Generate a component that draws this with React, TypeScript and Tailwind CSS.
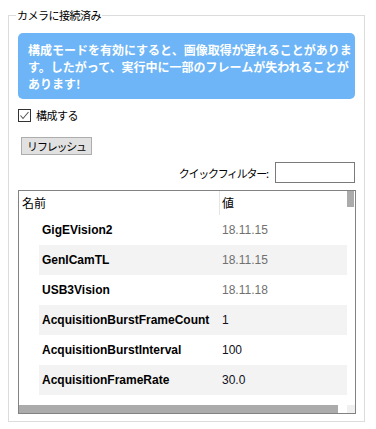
import React from 'react';

const jp = { fontFamily: '"Noto Sans CJK JP", "Noto Sans", sans-serif' };
const latin = { fontFamily: '"Liberation Sans", Arial, sans-serif' };

const rows = [
  { name: 'GigEVision2', value: '18.11.15', muted: true },
  { name: 'GenICamTL', value: '18.11.15', muted: true },
  { name: 'USB3Vision', value: '18.11.18', muted: true },
  { name: 'AcquisitionBurstFrameCount', value: '1', muted: false },
  { name: 'AcquisitionBurstInterval', value: '100', muted: false },
  { name: 'AcquisitionFrameRate', value: '30.0', muted: false },
];

const CheckBox: React.FC = () => (
  <div className="w-[13px] h-[13px] border border-[#333333] bg-white flex items-center justify-center">
    <svg width="11" height="11" viewBox="0 0 11 11">
      <polyline points="1.5,5.5 4,8.5 9.5,2" fill="none" stroke="#555555" strokeWidth="1.1" />
    </svg>
  </div>
);

export default function App() {
  return (
    <div className="w-[376px] h-[429px] bg-white pt-[15px] pl-[8px] text-black">
      {/* Group box */}
      <div className="relative w-[357px] h-[407px] border border-[#dcdcdc] px-[9px] pt-[17px]">
        <span
          className="absolute -top-[9px] left-[7px] bg-white px-[1px] text-[11px] leading-[16px] tracking-[-0.5px] text-black"
          style={jp}
        >
          カメラに接続済み
        </span>

        {/* Info banner */}
        <div
          className="h-[66px] rounded-[5px] bg-[#6db5f6] pl-[10px] pt-[8px] text-white font-bold text-[12px] leading-[17px] whitespace-nowrap"
          style={jp}
        >
          構成モードを有効にすると、画像取得が遅れることがありま
          <br />
          す。したがって、実行中に一部のフレームが失われることが
          <br />
          あります!
        </div>

        {/* Configure checkbox */}
        <div className="mt-[10px] h-[13px] flex items-center gap-[5px]">
          <CheckBox />
          <span className="text-[11px] leading-[13px] tracking-[-0.5px]" style={jp}>
            構成する
          </span>
        </div>

        {/* Refresh */}
        <button
          className="mt-[15px] ml-[3px] w-[71px] h-[18px] bg-[#e1e1e1] border border-[#adadad] flex items-center justify-center text-[11px] leading-[14px] tracking-[-1.2px]"
          style={jp}
        >
          リフレッシュ
        </button>

        {/* Quick filter */}
        <div className="mt-[7px] h-[21px] flex items-center justify-end gap-[6px]">
          <span className="text-[11px] leading-[14px] tracking-[-1.3px]" style={jp}>
            クイックフィルター<span className="tracking-normal">:</span>
          </span>
          <div className="w-[80px] h-[21px] border border-[#7a7a7a] bg-white" />
        </div>

        {/* Property grid */}
        <div className="mt-[7px] w-[338px] h-[224px] border border-[#828282] flex flex-col">
          <div className="flex flex-1 min-h-0">
            <div className="flex-1 overflow-hidden">
              <div className="h-[24px] flex items-center">
                <div className="w-[201px] h-[24px] pl-[3px] flex items-center border-r border-[#e5e5e5] text-[12px]" style={jp}>
                  名前
                </div>
                <div className="pl-[2px] text-[12px]" style={jp}>
                  値
                </div>
              </div>
              {rows.map((r, i) => (
                <div
                  key={r.name}
                  className={`ml-[20px] h-[30px] flex items-center ${i % 2 === 1 ? 'bg-[#f3f3f3]' : 'bg-white'}`}
                >
                  <div className="w-[181px] pl-[3px] text-[12px] font-bold whitespace-nowrap overflow-hidden" style={latin}>
                    {r.name}
                  </div>
                  <div
                    className={`pl-[2px] text-[12px] ${r.muted ? 'text-[#707070]' : 'text-[#101020]'}`}
                    style={latin}
                  >
                    {r.value}
                  </div>
                </div>
              ))}
            </div>
            {/* vertical scrollbar */}
            <div className="w-[8px] bg-white">
              <div className="w-[7px] h-[16px] bg-[#ababab]" />
            </div>
          </div>
          {/* horizontal scrollbar */}
          <div className="h-[8px] flex">
            <div className="w-[319px] h-[8px] bg-[#ababab]" />
            <div className="flex-1 bg-white" />
            <div className="w-[8px] h-[8px] bg-[#f0f0f0]" />
          </div>
        </div>
      </div>
    </div>
  );
}
